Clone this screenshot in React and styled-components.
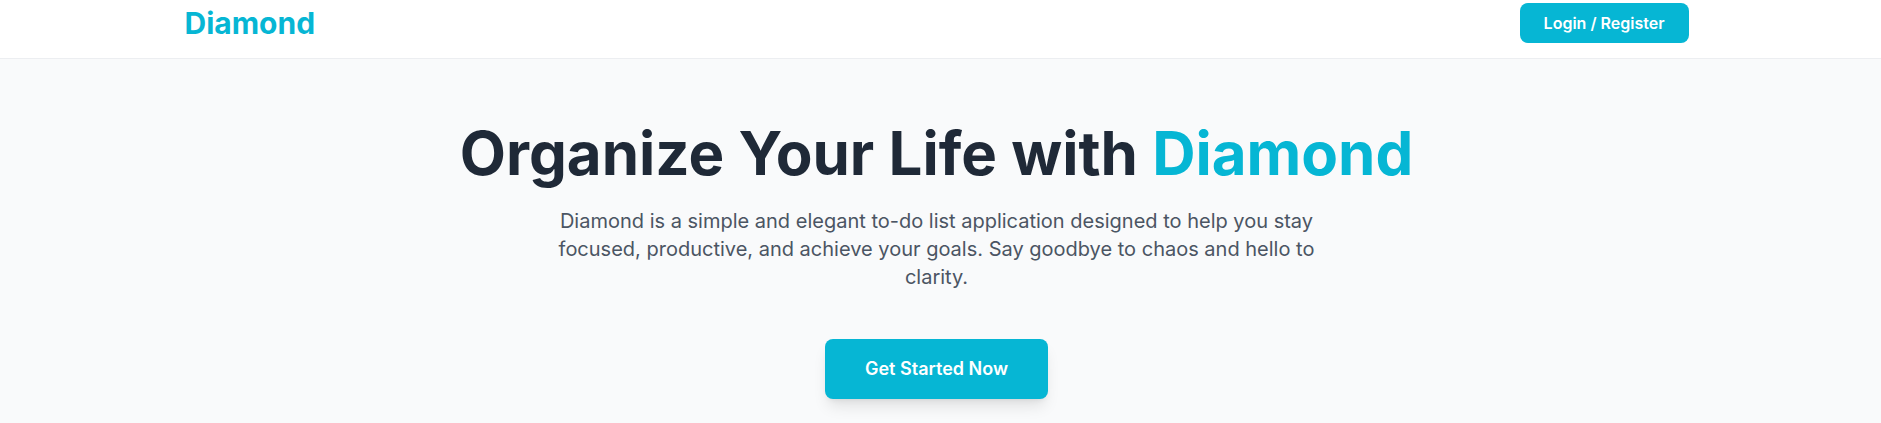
import React from "react";
import styled, { createGlobalStyle } from "styled-components";

const GlobalStyle = createGlobalStyle`
  html, body {
    margin: 0;
    padding: 0;
    background: #f9fafb;
    font-family: Inter, "Noto Sans", "Liberation Sans", sans-serif;
    -webkit-font-smoothing: antialiased;
  }
  * { box-sizing: border-box; }
`;

const Header = styled.header`
  background: #ffffff;
  border-bottom: 1px solid #eceef1;
  padding-bottom: 12px;
`;

const HeaderRow = styled.div`
  max-width: 1536px;
  margin: 0 auto;
  padding: 3px 20px 3px 12px;
  display: flex;
  align-items: center;
  justify-content: space-between;
`;

const Logo = styled.a`
  font-size: 30px;
  line-height: 36px;
  font-weight: 700;
  color: #06b6d4;
  text-decoration: none;
`;

const Button = styled.button`
  border: none;
  cursor: pointer;
  background: #06b6d4;
  color: #ffffff;
  font-family: inherit;
  font-weight: 600;
  font-size: ${(p) => (p.$large ? "18px" : "16px")};
  line-height: ${(p) => (p.$large ? "28px" : "24px")};
  padding: ${(p) => (p.$large ? "16px 40px" : "8px 24px")};
  border-radius: 8px;
  box-shadow: ${(p) =>
    p.$large
      ? "0 10px 15px -3px rgba(0,0,0,0.1), 0 4px 6px -4px rgba(0,0,0,0.1)"
      : "none"};
`;

const Hero = styled.main`
  padding: 64px 8px 64px 0;
  display: flex;
  flex-direction: column;
  align-items: center;
  text-align: center;
`;

const Title = styled.h1`
  margin: 0 0 24px;
  font-size: 60px;
  line-height: 1;
  font-weight: 700;
  color: #1f2937;
`;

const Accent = styled.span`
  color: #06b6d4;
`;

const Lead = styled.p`
  margin: 0 0 48px;
  max-width: 768px;
  font-size: 20px;
  line-height: 28px;
  color: #4b5563;
`;

export default function App() {
  return (
    <>
      <GlobalStyle />
      <Header>
        <HeaderRow>
          <Logo href="#">Diamond</Logo>
          <Button>Login / Register</Button>
        </HeaderRow>
      </Header>
      <Hero>
        <Title>
          Organize Your Life with <Accent>Diamond</Accent>
        </Title>
        <Lead>
          Diamond is a simple and elegant to-do list application designed to
          help you stay focused, productive, and achieve your goals. Say goodbye
          to chaos and hello to clarity.
        </Lead>
        <Button $large>Get Started Now</Button>
      </Hero>
    </>
  );
}
